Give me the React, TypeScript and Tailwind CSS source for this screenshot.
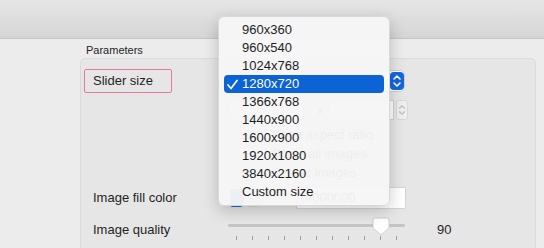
import React from "react";

const sizes = [
  "960x360",
  "960x540",
  "1024x768",
  "1280x720",
  "1366x768",
  "1440x900",
  "1600x900",
  "1920x1080",
  "3840x2160",
  "Custom size",
];

const selected = "1280x720";

const Chevrons: React.FC<{ color: string }> = ({ color }) => (
  <svg width="12" height="18" viewBox="0 0 12 18" fill="none">
    <path d="M3 7 L6 4 L9 7" stroke={color} strokeWidth="1.6" strokeLinecap="round" strokeLinejoin="round" />
    <path d="M3 11 L6 14 L9 11" stroke={color} strokeWidth="1.6" strokeLinecap="round" strokeLinejoin="round" />
  </svg>
);

// rows hidden under the open menu, they only shine through a little
const Checkbox: React.FC<{ label: string }> = ({ label }) => (
  <div className="flex h-[18px] items-center">
    <div className="ml-[24px] h-[14px] w-[14px] rounded-[3px] border border-[#c4c4c4] bg-white" />
    <span className="ml-[6px] text-[13px] text-[#222]">{label}</span>
  </div>
);

const SizeMenu: React.FC = () => (
  <div className="absolute left-[218px] top-[16px] w-[172px] rounded-[6px] border border-[#d8d8d8] bg-[#f6f6f6]/[0.96] pb-[4px] pt-[4px] shadow-[0_5px_16px_rgba(0,0,0,0.2)]">
    {sizes.map((s) => {
      const on = s === selected;
      return (
        <div
          key={s}
          className={`relative mx-[5px] flex h-[18px] items-center rounded-[4px] pl-[18px] text-[13px] leading-[18px] ${
            on ? "bg-[#0b63d6] text-white" : "text-[#1e1e1e]"
          }`}
        >
          {on && (
            <svg className="absolute left-[3px] top-[4px]" width="11" height="11" viewBox="0 0 11 11" fill="none">
              <path d="M1 6 L4 9.5 L10 1.5" stroke="white" strokeWidth="1.7" strokeLinecap="round" strokeLinejoin="round" />
            </svg>
          )}
          {s}
        </div>
      );
    })}
  </div>
);

const ticks = Array.from({ length: 11 }, (_, i) => i);

export default function App() {
  return (
    <div className="relative h-[248px] w-[544px] overflow-hidden bg-[#ececec] font-['Liberation_Sans',Arial,sans-serif] text-[#1f1f1f]">
      <div className="h-[39px] border-b border-[#c6c6c6] bg-gradient-to-b from-[#e6e6e6] to-[#d5d5d5]" />

      <div className="pl-[80px]">
        <div className="ml-[6px] mt-[5px] text-[11px] leading-[13px] text-[#262626]">Parameters</div>

        <div className="mt-[1px] h-[200px] w-[456px] rounded-[5px] border border-[#dadada] bg-[#e6e6e6] pt-[10px]">
          {/* slider size */}
          <div className="flex h-[24px] items-center">
            <div className="w-[147px] pl-[3px]">
              <div className="flex h-[24px] w-[88px] items-center rounded-[2px] border-[1.5px] border-[#e8789c] pl-[8px] text-[13px]">
                Slider size
              </div>
            </div>
            <div className="flex h-[20px] w-[176px] items-center justify-end rounded-[4px] bg-white shadow-[0_0_0_0.5px_rgba(0,0,0,0.2)]">
              <div className="flex h-[18px] w-[14px] items-center justify-center rounded-[4px] bg-[#1467df]">
                <Chevrons color="white" />
              </div>
            </div>
          </div>

          {/* width / height */}
          <div className="mt-[7px] flex h-[20px] items-center">
            <div className="w-[147px]" />
            <div className="h-[20px] w-[76px] border border-[#d0d0d0] bg-white" />
            <span className="ml-[13px] text-[13px]">x</span>
            <div className="ml-[4px] h-[20px] w-[66px] border border-[#d0d0d0] bg-white" />
            <div className="ml-[2px] flex h-[20px] w-[12px] items-center justify-center rounded-[3px] border border-[#d8d8d8] bg-[#efefef]">
              <Chevrons color="#c2c2c2" />
            </div>
          </div>

          {/* checkboxes */}
          <div className="mt-[6px] flex">
            <div className="w-[147px]" />
            <div className="flex flex-col gap-[1px]">
              <Checkbox label="Keep aspect ratio" />
              <Checkbox label="Scale all images" />
              <Checkbox label="Center images" />
            </div>
          </div>

          {/* fill color */}
          <div className="mt-[6px] flex h-[20px] items-center">
            <div className="w-[147px] pl-[12px] text-[13px]">Image fill color</div>
            <div className="ml-[2px] h-[18px] w-[13px] rounded-[3px] bg-[#1467df]" />
            <div className="ml-[4px] h-[18px] w-[13px] rounded-[3px] bg-[#d9d9d9]" />
            <div className="ml-[37px] h-[20px] w-[108px] bg-white pl-[8px] text-[13px] leading-[20px] shadow-[0_0_0_0.5px_rgba(0,0,0,0.15)]">
              #000000
            </div>
          </div>

          {/* quality */}
          <div className="mt-[7px] flex h-[30px] items-center">
            <div className="w-[147px] pl-[12px] text-[13px]">Image quality</div>
            <div className="relative h-[30px] w-[177px]">
              <div className="absolute left-0 right-0 top-[9px] h-[3px] rounded-full bg-[#c4c4c4]" />
              <div className="absolute left-[8px] right-[8px] top-[21px] flex justify-between">
                {ticks.map((t) => (
                  <div key={t} className="h-[4px] w-px bg-[#9d9d9d]" />
                ))}
              </div>
              <svg className="absolute left-[144px] top-[2px]" width="18" height="19" viewBox="0 0 18 19">
                <path
                  d="M3 1 H15 A2 2 0 0 1 17 3 V11 L9 18 L1 11 V3 A2 2 0 0 1 3 1 Z"
                  fill="white"
                  stroke="#c4c4c4"
                  strokeWidth="0.8"
                />
              </svg>
            </div>
            <span className="ml-[32px] text-[13px]">90</span>
          </div>
        </div>
      </div>

      <SizeMenu />
    </div>
  );
}
